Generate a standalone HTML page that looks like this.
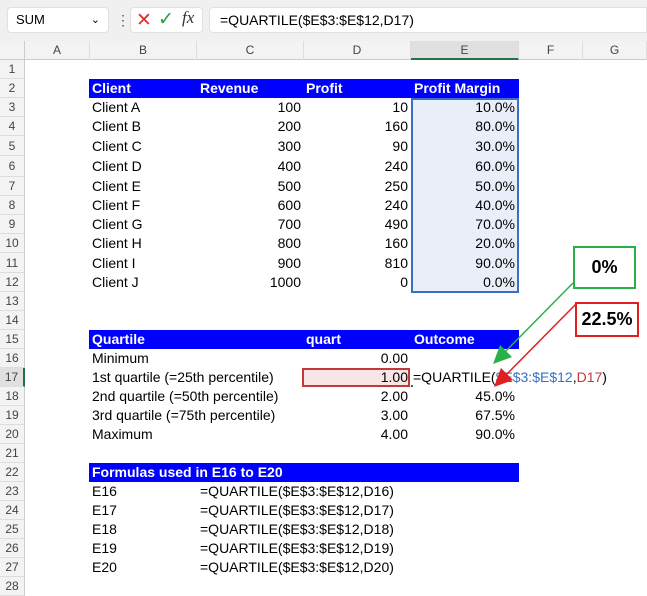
<!DOCTYPE html><html><head><style>
body{margin:0;width:647px;height:595px;overflow:hidden;background:#fff;font-family:"Liberation Sans",sans-serif;position:relative}
div{position:absolute;box-sizing:border-box}
.t{font-size:14px;line-height:19px;white-space:nowrap;color:#000}
.r{text-align:right}
.rh{left:0;width:25px;font-size:12px;color:#444;text-align:center;background:#f3f3f3;border-bottom:1px solid #ddd;border-right:1px solid #ccc}
.ch{top:41px;height:19px;font-size:12px;color:#444;text-align:center;line-height:19px;background:#f3f3f3;border-right:1px solid #ddd;border-bottom:1px solid #ccc}
.hd{background:#0000ff;color:#fff;font-weight:bold}
</style></head><body>
<div style="left:0;top:0;width:647px;height:41px;background:#f0f0f0"></div>
<div style="left:7px;top:7px;width:102px;height:26px;background:#fff;border-radius:4px;border:1px solid #e0e0e0;font-size:13px;line-height:24px;padding-left:8px">SUM<span style="position:absolute;right:8px;font-size:11px">&#8964;</span></div>
<div style="left:116px;top:12px;font-size:14px;color:#555">&#8942;</div>
<div style="left:130px;top:7px;width:73px;height:26px;background:#fff;border-radius:4px;border:1px solid #e0e0e0"></div>
<div style="left:136px;top:9px;font-size:19px;color:#e03030">&#10005;</div>
<div style="left:158px;top:8px;font-size:19px;color:#2a9d3a">&#10003;</div>
<div style="left:182px;top:8px;font-size:17px;font-style:italic;font-family:'Liberation Serif',serif;color:#333">fx</div>
<div style="left:209px;top:7px;width:438px;height:26px;background:#fff;border-radius:4px 0 0 4px;border:1px solid #e0e0e0;font-size:14px;line-height:24px;padding-left:10px">=QUARTILE($E$3:$E$12,D17)</div>
<div style="left:0;top:41px;width:25px;height:19px;background:#f3f3f3;border-right:1px solid #ccc;border-bottom:1px solid #ccc"></div>
<div class="ch" style="left:25px;width:65px">A</div>
<div class="ch" style="left:90px;width:107px">B</div>
<div class="ch" style="left:197px;width:107px">C</div>
<div class="ch" style="left:304px;width:107px">D</div>
<div class="ch" style="left:411px;width:108px;background:#e0e0e0;border-bottom:2px solid #217346">E</div>
<div class="ch" style="left:519px;width:64px">F</div>
<div class="ch" style="left:583px;width:64px">G</div>
<div id="rows"></div>
<script>
var tops=[60,79,98,117,136,156,177,196,215,234,253,273,292,311,330,349,368,387,406,425,444,463,482,501,520,539,558,577,596];
var h='';
for(var i=1;i<=28;i++){var t=tops[i-1],hh=tops[i]-t;h+='<div class="rh t" style="top:'+t+'px;height:'+hh+'px;line-height:'+hh+'px;'+(i==17?'background:#e0e0e0;border-right:2px solid #217346;':'')+'">'+i+'</div>';}
function cell(r,x,w,txt,cls,st){var t=tops[r-1],hh=tops[r]-t;h+='<div class="t '+(cls||'')+'" style="top:'+t+'px;height:'+hh+'px;line-height:'+hh+'px;left:'+x+'px;width:'+w+'px;'+(st||'')+'">'+txt+'</div>';}
h+='<div style="left:411px;top:98px;width:108px;height:195px;background:#e9eef8;border:2px solid #3a6fc4"></div>';
cell(2,89,430,'','hd');
cell(2,92,100,'Client','hd','background:none');cell(2,200,100,'Revenue','hd','background:none');cell(2,306,100,'Profit','hd','background:none');cell(2,414,100,'Profit Margin','hd','background:none');
var d=[['A',100,10,'10.0%'],['B',200,160,'80.0%'],['C',300,90,'30.0%'],['D',400,240,'60.0%'],['E',500,250,'50.0%'],['F',600,240,'40.0%'],['G',700,490,'70.0%'],['H',800,160,'20.0%'],['I',900,810,'90.0%'],['J',1000,0,'0.0%']];
for(var k=0;k<10;k++){var r=k+3;cell(r,92,100,'Client '+d[k][0]);cell(r,197,104,d[k][1],'r');cell(r,304,104,d[k][2],'r');cell(r,411,104,d[k][3],'r');}
cell(15,89,430,'','hd');cell(15,92,200,'Quartile','hd','background:none');cell(15,306,100,'quart','hd','background:none');cell(15,414,100,'Outcome','hd','background:none');
var q=[['Minimum','0.00',''],['1st quartile (=25th percentile)','1.00',''],['2nd quartile (=50th percentile)','2.00','45.0%'],['3rd quartile (=75th percentile)','3.00','67.5%'],['Maximum','4.00','90.0%']];
h+='<div style="left:302px;top:368px;width:108px;height:19px;background:#f8e6e6;border:2px solid #c0393b"></div>';
h+='<div style="left:411px;top:385px;width:108px;height:2px;background:#217346"></div>';
for(var k=0;k<5;k++){var r=k+16;cell(r,92,210,q[k][0]);cell(r,304,104,q[k][1],'r');if(q[k][2])cell(r,411,104,q[k][2],'r');}
cell(17,413,230,'=QUARTILE(<span style="color:#3a6fc4">$E$3:$E$12</span>,<span style="color:#c0393b">D17</span>)','','background:#fff;');
cell(22,89,430,'','hd');cell(22,92,300,'Formulas used in E16 to E20','hd','background:none');
for(var k=0;k<5;k++){var r=k+23;cell(r,92,100,'E'+(16+k));cell(r,200,300,'=QUARTILE($E$3:$E$12,D'+(16+k)+')');}
document.getElementById('rows').outerHTML=h;
</script>
<div style="left:573px;top:246px;width:63px;height:43px;border:2px solid #2ab04a;background:#fff;font-weight:bold;font-size:18px;text-align:center;line-height:39px">0%</div>
<div style="left:575px;top:302px;width:64px;height:35px;border:2px solid #e02020;background:#fff;font-weight:bold;font-size:18px;text-align:center;line-height:31px">22.5%</div>
<svg style="position:absolute;left:0;top:0" width="647" height="595">
<line x1="573" y1="283" x2="505" y2="352" stroke="#2ab04a" stroke-width="1.5"/>
<polygon points="493,364 500,345 512,357" fill="#2ab04a"/>
<line x1="576" y1="304" x2="506" y2="375" stroke="#e02020" stroke-width="1.5"/>
<polygon points="494,387 501,368 513,380" fill="#e02020"/>
</svg>
</body></html>
